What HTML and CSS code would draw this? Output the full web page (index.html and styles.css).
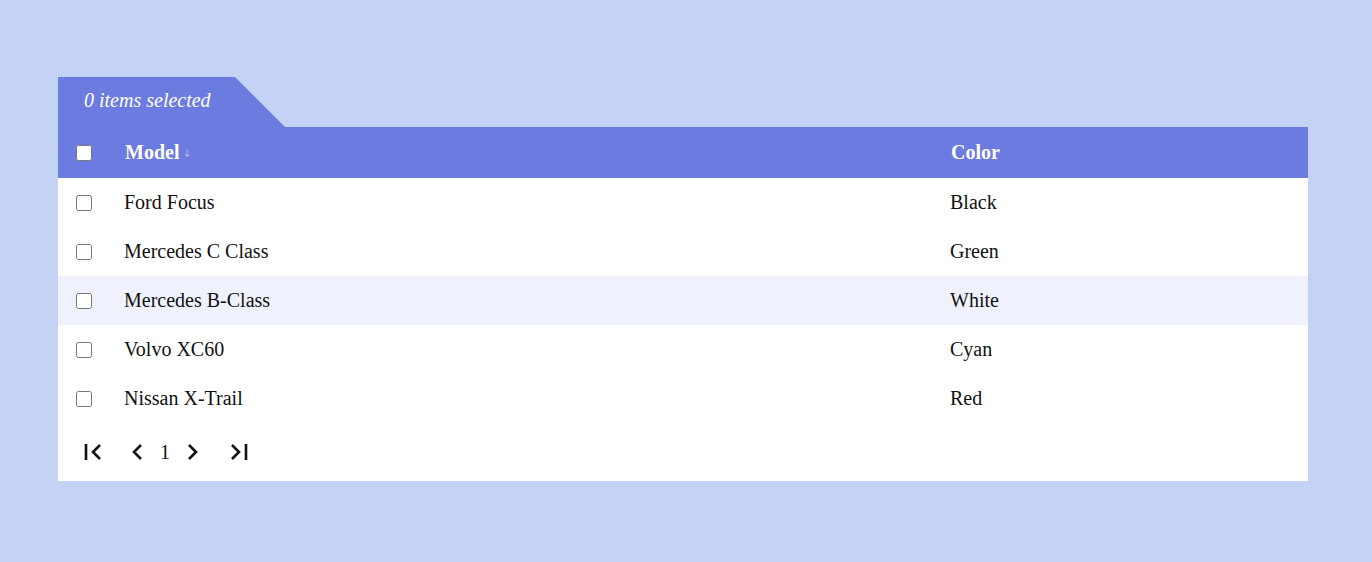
FILE: index.html
```html
<!DOCTYPE html>
<html>
<head>
<meta charset="utf-8">
<link rel="stylesheet" href="styles.css">
</head>
<body>
<div class="page">
  <div class="grid-wrap">
    <div class="tab"><span>0 items selected</span></div>
    <div class="table">
      <div class="row head">
        <div class="cell check"><input type="checkbox"></div>
        <div class="cell">Model <span class="sort">↓</span></div>
        <div class="cell">Color</div>
      </div>
      <div class="row">
        <div class="cell check"><input type="checkbox"></div>
        <div class="cell">Ford Focus</div>
        <div class="cell">Black</div>
      </div>
      <div class="row">
        <div class="cell check"><input type="checkbox"></div>
        <div class="cell">Mercedes C Class</div>
        <div class="cell">Green</div>
      </div>
      <div class="row hover">
        <div class="cell check"><input type="checkbox"></div>
        <div class="cell">Mercedes B-Class</div>
        <div class="cell">White</div>
      </div>
      <div class="row">
        <div class="cell check"><input type="checkbox"></div>
        <div class="cell">Volvo XC60</div>
        <div class="cell">Cyan</div>
      </div>
      <div class="row">
        <div class="cell check"><input type="checkbox"></div>
        <div class="cell">Nissan X-Trail</div>
        <div class="cell">Red</div>
      </div>
      <div class="pager">
        <button class="pbtn first" aria-label="First">
          <svg width="20" height="18" viewBox="0 0 20 18"><path d="M3 1v16" stroke="#111" stroke-width="2.6" fill="none"/><path d="M17 2l-7 7 7 7" stroke="#111" stroke-width="2.6" fill="none"/></svg>
        </button>
        <button class="pbtn prev" aria-label="Previous">
          <svg width="11" height="18" viewBox="0 0 11 18"><path d="M9 2l-7 7 7 7" stroke="#111" stroke-width="2.6" fill="none"/></svg>
        </button>
        <span class="pnum">1</span>
        <button class="pbtn next" aria-label="Next">
          <svg width="11" height="18" viewBox="0 0 11 18"><path d="M2 2l7 7-7 7" stroke="#111" stroke-width="2.6" fill="none"/></svg>
        </button>
        <button class="pbtn last" aria-label="Last">
          <svg width="20" height="18" viewBox="0 0 20 18"><path d="M3 2l7 7-7 7" stroke="#111" stroke-width="2.6" fill="none"/><path d="M17 1v16" stroke="#111" stroke-width="2.6" fill="none"/></svg>
        </button>
      </div>
    </div>
  </div>
</div>
</body>
</html>
```
FILE: styles.css
```css
html, body {
  margin: 0;
  padding: 0;
  background: #c4d2f5;
}
.page {
  padding: 77px 64px 0 58px;
  font-family: "Liberation Serif", "Times New Roman", serif;
  font-size: 20px;
  color: #111;
}
.grid-wrap {
  width: 1250px;
}
.tab {
  width: 227px;
  height: 50px;
  background: #6c7be0;
  clip-path: polygon(0 0, 177px 0, 100% 100%, 0 100%);
  color: #fff;
  font-style: italic;
  display: flex;
  align-items: center;
  padding-left: 26px;
  box-sizing: border-box;
  padding-bottom: 4px;
}
.table {
  background: #fff;
}
.row {
  display: grid;
  grid-template-columns: 66px 826px 1fr;
  height: 49px;
  align-items: center;
}
.row.head {
  height: 51px;
  background: #6c7be0;
  color: #fff;
  font-weight: bold;
}
.row.head .cell:not(.check) {
  padding-left: 1px;
}
.row.hover {
  background: #eff2fd;
}
.cell {
  display: flex;
  align-items: center;
}
.check {
  padding-left: 18px;
}
.check input {
  margin: 0;
  width: 16px;
  height: 16px;
}
.sort {
  font-family: "DejaVu Sans", sans-serif;
  font-weight: normal;
  font-size: 11px;
  color: #a9b3ee;
  margin-left: 3px;
  margin-top: 1px;
}
.pager {
  height: 58px;
  display: flex;
  align-items: center;
  padding-left: 25px;
}
.pbtn {
  background: none;
  border: none;
  padding: 0;
  display: flex;
  align-items: center;
  cursor: pointer;
}
.prev { margin-left: 29px; }
.pnum { margin-left: 17px; }
.next { margin-left: 17px; }
.last { margin-left: 31px; }
```
